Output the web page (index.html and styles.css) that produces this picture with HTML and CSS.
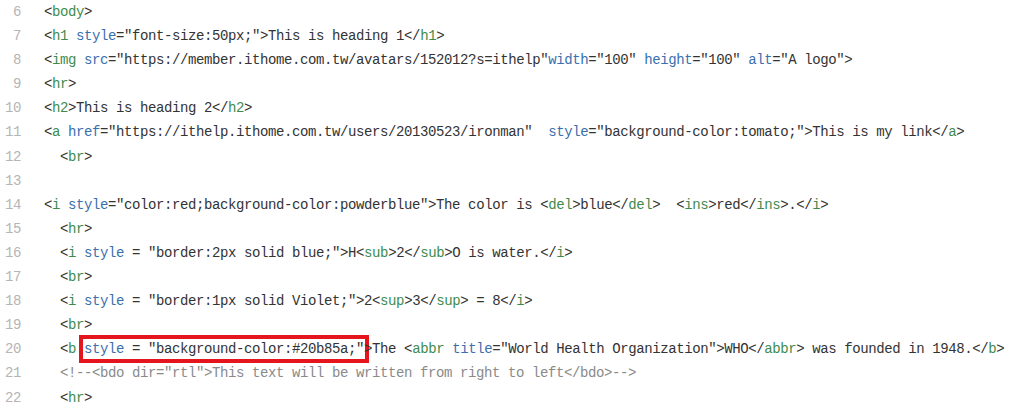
FILE: index.html
```html
<!DOCTYPE html>
<html>
<head>
  <title>Code listing</title>
  <link rel="stylesheet" href="styles.css">
</head>
<body>
  <div class="code">
    <div class="line"><span class="num">6</span><span class="src">&lt;<span class="t">body</span>&gt;</span></div>
    <div class="line"><span class="num">7</span><span class="src">&lt;<span class="t">h1</span> <span class="a">style</span>="font-size:50px;"&gt;This is heading 1&lt;/<span class="t">h1</span>&gt;</span></div>
    <div class="line"><span class="num">8</span><span class="src">&lt;<span class="t">img</span> <span class="a">src</span>="https://member.ithome.com.tw/avatars/152012?s=ithelp"<span class="a">width</span>="100" <span class="a">height</span>="100" <span class="a">alt</span>="A logo"&gt;</span></div>
    <div class="line"><span class="num">9</span><span class="src">&lt;<span class="t">hr</span>&gt;</span></div>
    <div class="line"><span class="num">10</span><span class="src">&lt;<span class="t">h2</span>&gt;This is heading 2&lt;/<span class="t">h2</span>&gt;</span></div>
    <div class="line"><span class="num">11</span><span class="src">&lt;<span class="t">a</span> <span class="a">href</span>="https://ithelp.ithome.com.tw/users/20130523/ironman"  <span class="a">style</span>="background-color:tomato;"&gt;This is my link&lt;/<span class="t">a</span>&gt;</span></div>
    <div class="line"><span class="num">12</span><span class="src">  &lt;<span class="t">br</span>&gt;</span></div>
    <div class="line"><span class="num">13</span><span class="src"></span></div>
    <div class="line"><span class="num">14</span><span class="src">&lt;<span class="t">i</span> <span class="a">style</span>="color:red;background-color:powderblue"&gt;The color is &lt;<span class="t">del</span>&gt;blue&lt;/<span class="t">del</span>&gt;  &lt;<span class="t">ins</span>&gt;red&lt;/<span class="t">ins</span>&gt;.&lt;/<span class="t">i</span>&gt;</span></div>
    <div class="line"><span class="num">15</span><span class="src">  &lt;<span class="t">hr</span>&gt;</span></div>
    <div class="line"><span class="num">16</span><span class="src">  &lt;<span class="t">i</span> <span class="a">style</span> = "border:2px solid blue;"&gt;H&lt;<span class="t">sub</span>&gt;2&lt;/<span class="t">sub</span>&gt;O is water.&lt;/<span class="t">i</span>&gt;</span></div>
    <div class="line"><span class="num">17</span><span class="src">  &lt;<span class="t">br</span>&gt;</span></div>
    <div class="line"><span class="num">18</span><span class="src">  &lt;<span class="t">i</span> <span class="a">style</span> = "border:1px solid Violet;"&gt;2&lt;<span class="t">sup</span>&gt;3&lt;/<span class="t">sup</span>&gt; = 8&lt;/<span class="t">i</span>&gt;</span></div>
    <div class="line"><span class="num">19</span><span class="src">  &lt;<span class="t">br</span>&gt;</span></div>
    <div class="line"><span class="num">20</span><span class="src">  &lt;<span class="t">b</span> <span class="mark"><span class="a">style</span> = "background-color:#20b85a;"</span>&gt;The &lt;<span class="t">abbr</span> <span class="a">title</span>="World Health Organization"&gt;WHO&lt;/<span class="t">abbr</span>&gt; was founded in 1948.&lt;/<span class="t">b</span>&gt;</span></div>
    <div class="line"><span class="num">21</span><span class="src c">  &lt;!--&lt;bdo dir="rtl"&gt;This text will be written from right to left&lt;/bdo&gt;--&gt;</span></div>
    <div class="line"><span class="num">22</span><span class="src">  &lt;<span class="t">hr</span>&gt;</span></div>
  </div>
</body>
</html>
```

FILE: styles.css
```css
body {
  margin: 0;
  background: #fff;
  overflow: hidden;
}

.code {
  font-family: "Liberation Mono", monospace;
  font-size: 14px;
  letter-spacing: -0.4px;
  color: #333;
}

.line {
  display: flex;
  height: 24.1px;
  line-height: 24.1px;
  white-space: pre;
}

.num {
  width: 21px;
  text-align: right;
  color: #b5b5b5;
  margin-right: 23px;
}

/* token colours */
.t {
  color: #3f8b4e;
}

.a {
  color: #3a6fae;
}

.c {
  color: #8a8a8a;
}

.mark {
  display: inline-block;
  line-height: 18px;
  outline: 4px solid #e4151c;
  outline-offset: 1px;
}
```
